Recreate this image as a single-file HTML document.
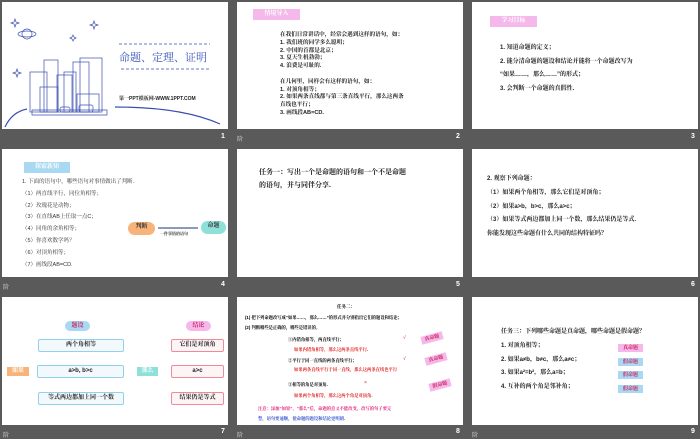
<!DOCTYPE html>
<html><head><meta charset="utf-8"><style>
*{margin:0;padding:0;box-sizing:border-box}
body{width:700px;height:438px;background:#5a5a5a;position:relative;overflow:hidden;font-family:"Liberation Sans","Noto Serif CJK SC","Noto Sans CJK SC",sans-serif}
.s{position:absolute;background:#fff;overflow:hidden}
.a{position:absolute;white-space:nowrap}
.t{font-size:5.6px;font-weight:bold;color:#222}
.n{position:absolute;color:#fff;font-size:7px;font-weight:bold}
.z{position:absolute;color:#ddd;font-size:6px}
.lab{position:absolute;color:#fff;font-size:6px;font-weight:bold;text-align:center;line-height:11px}
.box{position:absolute;border:1px solid #8fd3ea;border-radius:2px;background:#f3f8fc;font-size:6px;font-weight:bold;text-align:center;line-height:11px;color:#222}
.box.r{border-color:#f08a9a;background:#fdf4f5}
.tag{position:absolute;font-size:5px;font-weight:bold;color:#d0205a;text-align:center;line-height:8px}
.b8{position:absolute;white-space:nowrap;font-size:4.3px;font-weight:bold;left:51px;line-height:6px}
.r8{position:absolute;white-space:nowrap;font-size:4.3px;font-weight:bold;left:57px;color:#e02020;line-height:6px}
</style></head><body>

<!-- slide 1 -->
<div class="s" style="left:2px;top:2px;width:226px;height:127px">
<svg width="226" height="127" style="position:absolute;left:0;top:0" fill="none" stroke="#3a4fb0" stroke-width="0.7">
<circle cx="25" cy="32" r="5"/><ellipse cx="25" cy="32" rx="9" ry="3"/>
<path d="M12 20l1 -3 1 3 3 1 -3 1 -1 3 -1 -3 -3 -1z M91 22l1 -3 1 3 3 1 -3 1 -1 3 -1 -3 -3 -1z M14 70l1 -3 1 3 3 1 -3 1 -1 3 -1 -3 -3 -1z M70 35l1 -2 1 2 2 1 -2 1 -1 2 -1 -2 -2 -1z"/>
<rect x="28" y="70" width="17" height="40"/><rect x="42" y="58" width="14" height="52"/><rect x="55" y="73" width="15" height="37"/><rect x="71" y="60" width="16" height="50"/><rect x="78" y="56" width="22" height="54"/><rect x="62" y="70" width="12" height="40"/><rect x="38" y="85" width="18" height="25"/><rect x="75" y="92" width="22" height="18"/>
<path d="M30 108 L105 108 L105 113 L30 113z"/>
<rect x="58" y="105" width="10" height="5" rx="2"/><rect x="77" y="103" width="14" height="7" rx="2"/>
<path d="M3 125 Q10 110 25 107" stroke-width="1.2"/>
<path d="M113 105 Q180 105 218 122" stroke-width="1.2"/>
<path d="M117 42 H208 M119 67 H208" stroke-dasharray="3 2"/>
</svg>
<div class="a" style="left:117px;top:47px;font-size:11px;color:#3a55b8">命题、定理、证明</div>
<div class="a" style="left:117px;top:93px;font-size:5px;font-weight:bold;color:#222">第一PPT模板网-WWW.1PPT.COM</div>
</div>

<!-- slide 2 -->
<div class="s" style="left:237px;top:2px;width:226px;height:127px">
<div class="lab" style="left:16px;top:7px;width:47px;background:#f4b8ea">情境导入</div>
<div class="a t" style="left:43px;top:30px;line-height:7.8px">在我们日常讲话中，经常会遇到这样的语句，如：<br>1. 我们班的同学多么聪明；<br>2. 中国的首都是北京；<br>3. 夏天生机勃勃；<br>4. 浪费是可耻的.<br><br>在几何里，同样会有这样的语句，如：<br>1. 对顶角相等；<br>2. 如果两条直线都与第三条直线平行，那么这两条<br>直线也平行；<br>3. 画线段AB=CD.</div>
</div>

<!-- slide 3 -->
<div class="s" style="left:472px;top:2px;width:226px;height:127px">
<div class="lab" style="left:18px;top:14px;width:47px;background:#f4b8ea">学习目标</div>
<div class="a t" style="left:28px;top:40px;line-height:13.5px;font-size:6px">1. 知道命题的定义；<br>2. 能分清命题的题设和结论并能将一个命题改写为<br>“如果……，那么……”的形式；<br>3. 会判断一个命题的真假性.</div>
</div>

<!-- slide 4 -->
<div class="s" style="left:2px;top:149px;width:226px;height:128px">
<div class="lab" style="left:22px;top:13px;width:46px;background:#a8d8f2">探索新知</div>
<div class="a" style="left:20px;top:28px;font-size:5.5px;color:#333;line-height:11.8px">1. 下面的语句中，哪些语句对事情做出了判断.<br>（1）两直线平行，同位角相等；<br>（2）玫瑰花是动物；<br>（3）在直线AB上任取一点C；<br>（4）同角的余角相等；<br>（5）你喜欢数学吗？<br>（6）对顶角相等；<br>（7）画线段AB=CD.</div>
<div class="lab" style="left:126px;top:73px;width:27px;height:13px;border-radius:7px;background:#f8b37a;color:#333">判断</div>
<div style="position:absolute;left:156px;top:78px;width:40px;height:2px;background:#8a9ab8"></div>
<div class="a" style="left:158px;top:82px;font-size:4px;font-weight:bold;color:#333">一件事情的语句</div>
<div class="lab" style="left:199px;top:72px;width:25px;height:13px;border-radius:7px;background:#8fe0d8;color:#333">命题</div>
</div>

<!-- slide 5 -->
<div class="s" style="left:237px;top:149px;width:226px;height:128px">
<div class="a" style="left:22px;top:17px;font-size:7px;font-weight:bold;color:#222;line-height:13px">任务一：写出一个是命题的语句和一个不是命题<br>的语句，并与同伴分享.</div>
</div>

<!-- slide 6 -->
<div class="s" style="left:472px;top:149px;width:226px;height:128px">
<div class="a t" style="left:15px;top:24px;line-height:13.8px;font-size:6px">2. 观察下列命题：<br>（1）如果两个角相等，那么它们是对顶角；<br>（2）如果a&gt;b，b&gt;c，那么a&gt;c；<br>（3）如果等式两边都加上同一个数，那么结果仍是等式.<br>你能发现这些命题有什么共同的结构特征吗？</div>
</div>

<!-- slide 7 -->
<div class="s" style="left:2px;top:297px;width:226px;height:128px">
<div class="lab" style="left:63px;top:24px;width:25px;height:10px;line-height:10px;background:#a8d8f2;color:#d02060;border-radius:5px">题设</div>
<div class="lab" style="left:184px;top:24px;width:25px;height:10px;line-height:10px;background:#f4b8ea;color:#d02060;border-radius:5px">结论</div>
<div class="lab" style="left:5px;top:70px;width:22px;height:9px;line-height:9px;background:#f8b37a">如果</div>
<div class="lab" style="left:135px;top:70px;width:21px;height:9px;line-height:9px;background:#8fe0d8">那么</div>
<div class="box" style="left:36px;top:42px;width:86px;height:13px">两个角相等</div>
<div class="box" style="left:35px;top:68px;width:87px;height:13px">a&gt;b, b&gt;c</div>
<div class="box" style="left:36px;top:95px;width:86px;height:13px">等式两边都加上同一个数</div>
<div class="box r" style="left:169px;top:42px;width:53px;height:13px">它们是对顶角</div>
<div class="box r" style="left:169px;top:68px;width:53px;height:13px">a&gt;c</div>
<div class="box r" style="left:169px;top:95px;width:53px;height:13px">结果仍是等式</div>
</div>

<!-- slide 8 -->
<div class="s" style="left:237px;top:297px;width:226px;height:128px">
<div class="a" style="left:100px;top:7px;font-size:4.5px;font-weight:bold">任务二：</div>
<div class="a" style="left:8px;top:16px;font-size:4.3px;font-weight:bold;line-height:10px">(1) 把下列命题改写成“如果……，那么……”的形式并分别指出它们的题设和结论；<br>(2) 判断哪些是正确的，哪些是错误的。</div>
<div class="b8" style="top:40px">①内错角相等，两直线平行；</div>
<div class="r8" style="top:50px">如果内错角相等，那么这两条直线平行.</div>
<div class="b8" style="top:61px">②平行于同一直线的两条直线平行；</div>
<div class="r8" style="top:70px">如果两条直线平行于同一直线，那么这两条直线也平行</div>
<div class="b8" style="top:85px">③相等的角是对顶角.</div>
<div class="r8" style="top:96px">如果两个角相等，那么这两个角是对顶角.</div>
<div class="a" style="left:166px;top:38px;font-size:5px;color:#e02020">√</div>
<div class="a" style="left:166px;top:59px;font-size:5px;color:#e02020">√</div>
<div class="a" style="left:127px;top:83px;font-size:5px;color:#e02020">×</div>
<div class="tag" style="left:184px;top:37px;width:22px;background:#f4b8ea;transform:rotate(-15deg)">真命题</div>
<div class="tag" style="left:188px;top:58px;width:22px;background:#f4b8ea;transform:rotate(-15deg)">真命题</div>
<div class="tag" style="left:192px;top:84px;width:22px;background:#f4b8ea;transform:rotate(-15deg)">假命题</div>
<div class="a" style="left:21px;top:107px;font-size:4.3px;font-weight:bold;color:#e0207a;line-height:10px">注意：添加“如果”、“那么”后，命题的意义不能改变，改写的句子要完<br><span style="color:#3050d0">整，语句要通顺，使命题的题设和结论更明朗.</span></div>
</div>

<!-- slide 9 -->
<div class="s" style="left:472px;top:297px;width:226px;height:128px">
<div class="a t" style="left:29px;top:29px;font-size:6px;line-height:13.8px">任务三：下列哪些命题是真命题，哪些命题是假命题？<br>1. 对顶角相等；<br>2. 如果a≠b，b≠c，那么a≠c；<br>3. 如果a²=b²，那么a=b；<br>4. 互补的两个角是邻补角；</div>
<div class="tag" style="left:146px;top:47px;width:25px;background:#f4b8ea">真命题</div>
<div class="tag" style="left:146px;top:61px;width:25px;background:#a8d8f2">假命题</div>
<div class="tag" style="left:146px;top:74px;width:25px;background:#a8d8f2">假命题</div>
<div class="tag" style="left:146px;top:88px;width:25px;background:#a8d8f2">假命题</div>
</div>

<div class="n" style="left:221px;top:133px">1</div>
<div class="n" style="left:456px;top:133px">2</div>
<div class="n" style="left:691px;top:133px">3</div>
<div class="n" style="left:221px;top:281px">4</div>
<div class="n" style="left:456px;top:281px">5</div>
<div class="n" style="left:691px;top:281px">6</div>
<div class="n" style="left:221px;top:428px">7</div>
<div class="n" style="left:456px;top:428px">8</div>
<div class="n" style="left:691px;top:428px">9</div>
<div class="z" style="left:237px;top:134px">阶</div>
<div class="z" style="left:3px;top:282px">阶</div>
<div class="z" style="left:3px;top:430px">阶</div>
<div class="z" style="left:237px;top:430px">阶</div>
<div class="z" style="left:472px;top:430px">阶</div>
</body></html>
